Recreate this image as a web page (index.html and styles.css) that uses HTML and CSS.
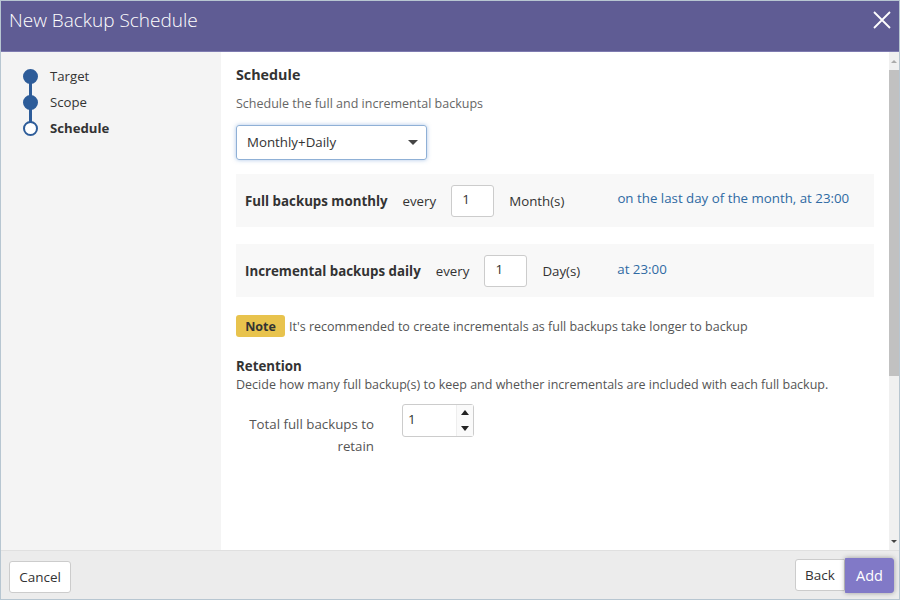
FILE: index.html
```html
<!DOCTYPE html>
<html>
<head>
<meta charset="utf-8">
<link rel="stylesheet" href="styles.css">
</head>
<body>
<div class="dialog">
  <header class="header">
    <h1 class="title">New Backup Schedule</h1>
    <svg class="close" width="18" height="18" viewBox="0 0 18 18"><path d="M1 1L17 17M17 1L1 17" stroke="#fff" stroke-width="1.8" fill="none"/></svg>
  </header>
  <div class="body">
    <nav class="steps">
      <div class="step done"><span class="dot"></span><span class="label">Target</span></div>
      <div class="step done"><span class="dot"></span><span class="label">Scope</span></div>
      <div class="step current"><span class="dot"></span><span class="label">Schedule</span></div>
    </nav>
    <main class="content">
      <h2 class="heading">Schedule</h2>
      <p class="sub">Schedule the full and incremental backups</p>
      <div class="select"><span>Monthly+Daily</span><span class="caret"></span></div>
      <div class="panel">
        <span class="plabel">Full backups monthly</span>
        <span class="every">every</span>
        <span class="num">1</span>
        <span class="unit">Month(s)</span>
        <span class="when w1">on the last day of the month, at 23:00</span>
      </div>
      <div class="panel panel2">
        <span class="plabel">Incremental backups daily</span>
        <span class="every">every</span>
        <span class="num">1</span>
        <span class="unit">Day(s)</span>
        <span class="when w2">at 23:00</span>
      </div>
      <div class="note"><span class="badge">Note</span><span>It's recommended to create incrementals as full backups take longer to backup</span></div>
      <h3 class="rhead">Retention</h3>
      <p class="rdesc">Decide how many full backup(s) to keep and whether incrementals are included with each full backup.</p>
      <div class="retain">
        <label class="rlabel">Total full backups to retain</label>
        <div class="spin"><span class="sval">1</span><span class="sbtns"><span class="up"></span><span class="down"></span></span></div>
      </div>
    </main>
    <div class="scrollbar"><span class="arr aup"></span><span class="thumb"></span><span class="track"></span><span class="arr adown"></span></div>
  </div>
  <footer class="footer">
    <button class="btn cancel">Cancel</button>
    <div class="right">
      <button class="btn back">Back</button>
      <button class="btn add">Add</button>
    </div>
  </footer>
</div>
</body>
</html>
```
FILE: styles.css
```css
* { box-sizing: border-box; }
html, body { margin: 0; padding: 0; }
body { width: 900px; height: 600px; font-family: "Open Sans", "Noto Sans", sans-serif; color: #333; background: #fff; }
.dialog { width: 900px; height: 600px; border: 1px solid #b7c6d1; display: flex; flex-direction: column; }
.header { height: 51px; background: #5f5c94; display: flex; align-items: center; justify-content: space-between; padding: 0 8px 0 8px; border-bottom: 1px solid #7e7bb0; }
.title { margin: 0; font-size: 19px; font-weight: 300; color: #fff; position: relative; top: -6px; }
.close { position: relative; top: -6px; }
.body { flex: 1; display: flex; min-height: 0; }
.steps { width: 220px; background: #f4f4f4; padding: 11px 0 0 22px; display: flex; flex-direction: column; }
.step { display: flex; align-items: center; height: 26px; position: relative; font-size: 13.2px; }
.dot { width: 15px; height: 15px; border-radius: 50%; background: #2d5c99; border: 2px solid #2d5c99; margin-right: 12px; position: relative; z-index: 1; }
.step.current .dot { background: #fff; }
.step.current .label { font-weight: 700; }
.step + .step::before { content: ""; position: absolute; left: 6px; top: -8px; width: 3px; height: 18px; background: #2d5c99; }
.content { flex: 1; padding: 12px 14px 0 15px; font-size: 12.5px; }
.heading { margin: 0; font-size: 14.3px; font-weight: 700; line-height: 22px; }
.sub { margin: 9px 0 0; color: #666; line-height: 18px; }
.select { margin-top: 12px; width: 191px; height: 35px; border: 1px solid #8fb0d6; border-radius: 3px; box-shadow: 0 0 4px rgba(102,150,210,0.55); display: flex; align-items: center; justify-content: space-between; padding: 0 8px 1px 10px; font-size: 13.3px; }
.caret { width: 0; height: 0; border-left: 5px solid transparent; border-right: 5px solid transparent; border-top: 5px solid #444; }
.panel { margin-top: 14px; width: 638px; height: 53px; background: #f8f8f8; display: flex; align-items: center; padding-left: 9px; font-size: 13.3px; }
.panel2 { margin-top: 17px; }
.plabel { font-weight: 700; }
.every { margin-left: 15px; }
.num { margin-left: 15px; width: 43px; height: 32px; background: #fff; border: 1px solid #ccc; border-radius: 3px; padding: 3px 0 0 10px; line-height: 20px; }
.unit { margin-left: 15px; }
.when { color: #2f6aa3; }
.w1 { margin-left: 53px; position: relative; top: -3px; }
.w2 { margin-left: 37px; position: relative; top: -2px; }
.note { margin-top: 18px; display: flex; align-items: center; color: #555; font-size: 12.5px; }
.badge { background: #e8c34d; color: #333; font-weight: 700; border-radius: 3px; width: 49px; height: 22px; display: flex; align-items: center; justify-content: center; margin-right: 4px; }
.rhead { margin: 19px 0 0 0; font-size: 13.3px; font-weight: 700; line-height: 20px; }
.rdesc { margin: 0; color: #555; line-height: 18px; }
.retain { margin-top: 5px; display: flex; align-items: flex-start; }
.rlabel { width: 138px; text-align: right; color: #555; font-size: 13.3px; line-height: 22px; padding-top: 14px; }
.spin { margin-left: 28px; margin-top: 5px; width: 72px; height: 33px; border: 1px solid #ccc; border-radius: 3px; display: flex; font-size: 13.3px; }
.sval { flex: 1; padding: 5px 0 0 5px; }
.sbtns { width: 17px; border-left: 1px solid #eee; display: flex; flex-direction: column; background: #fafafa; }
.up, .down { flex: 1; display: flex; align-items: center; justify-content: center; }
.up::after { content: ""; border-left: 4px solid transparent; border-right: 4px solid transparent; border-bottom: 5px solid #222; }
.down::after { content: ""; border-left: 4px solid transparent; border-right: 4px solid transparent; border-top: 5px solid #222; }
.scrollbar { width: 10px; background: #f0f0f0; display: flex; flex-direction: column; }
.arr { height: 18px; display: flex; align-items: center; justify-content: center; }
.aup::after { content: ""; border-left: 3px solid transparent; border-right: 3px solid transparent; border-bottom: 3px solid #aaa; }
.adown::after { content: ""; border-left: 3px solid transparent; border-right: 3px solid transparent; border-top: 3px solid #444; }
.thumb { height: 306px; background: #c1c1c1; }
.track { flex: 1; }
.footer { height: 49px; background: #ececec; border-top: 1px solid #e0e0e0; display: flex; align-items: center; justify-content: space-between; padding: 0 5px 0 8px; }
.btn { font-family: "Open Sans", "Noto Sans", sans-serif; font-size: 13.5px; color: #333; background: #fff; border: 1px solid #ccc; border-radius: 3px; height: 32px; padding: 0 9px; cursor: pointer; }
.cancel { margin-top: 4px; width: 62px; }
.right { display: flex; align-items: center; }
.back { border-radius: 3px 0 0 3px; width: 50px; padding: 0; }
.add { background: #8179c7; border-color: #8179c7; color: #fff; height: 35px; width: 49px; padding: 0; border-radius: 0 3px 3px 0; font-size: 14.5px; box-shadow: 0 0 5px rgba(0,0,0,0.35); }
```
